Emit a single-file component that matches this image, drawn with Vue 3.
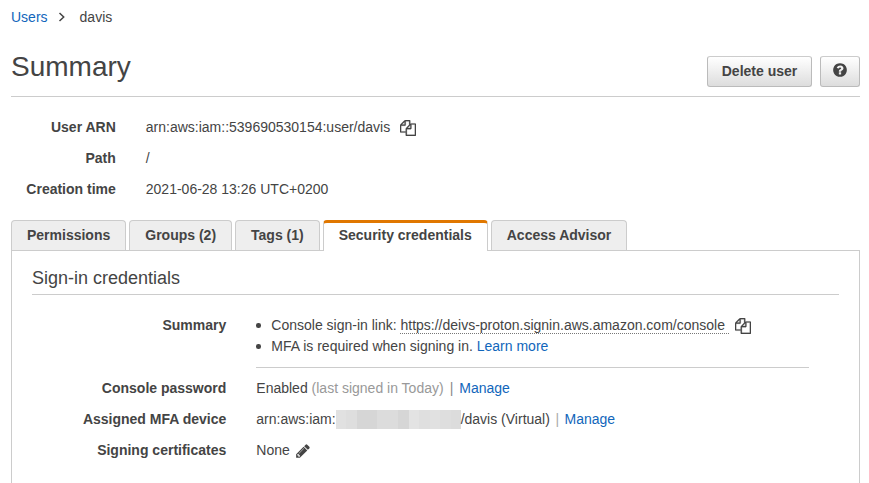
<script setup>
import { h } from 'vue'

const paths = {
  copy: 'M1696 384q40 0 68 28t28 68v1216q0 40-28 68t-68 28h-960q-40 0-68-28t-28-68v-288h-544q-40 0-68-28t-28-68v-672q0-40 20-88t48-76l408-408q28-28 76-48t88-20h416q40 0 68 28t28 68v328q68-40 128-40h416zm-544 213l-299 299h299v-299zm-640-384l-299 299h299v-299zm196 647l316-316v-416h-384v416q0 40-28 68t-68 28h-416v640h512v-256q0-40 20-88t48-76zm956 804v-1152h-384v416q0 40-28 68t-68 28h-416v640h896z',
  help: 'M1024 1376v-192q0-14-9-23t-23-9h-192q-14 0-23 9t-9 23v192q0 14 9 23t23 9h192q14 0 23-9t9-23zm256-672q0-88-55.5-163t-138.5-116-170-41q-243 0-371 213-15 24 8 42l132 100q7 6 19 6 16 0 25-12 53-68 86-92 34-24 86-24 48 0 85.5 26t37.5 59q0 38-20 61t-68 45q-63 28-115.5 86.5t-52.5 125.5v36q0 14 9 23t23 9h192q14 0 23-9t9-23q0-19 21.5-49.5t54.5-49.5q32-18 49-28.5t46-35 44.5-48 28-60.5 12.5-81zm384 192q0 209-103 385.5t-279.5 279.5-385.5 103-385.5-103-279.5-279.5-103-385.5 103-385.5 279.5-279.5 385.5-103 385.5 103 279.5 279.5 103 385.5z',
  pencil: 'M491 1536l91-91-235-235-91 91v107h128v128h107zm523-928q0-22-22-22-10 0-17 7l-542 542q-7 7-7 17 0 22 22 22 10 0 17-7l542-542q7-7 7-17zm-54-192l416 416-832 832h-416v-416zm683 96q0 53-37 90l-166 166-416-416 166-165q36-38 90-38 53 0 91 38l235 234q37 39 37 91z',
}
const Icon = (props) =>
  h('svg', { viewBox: '0 0 1792 1792', width: 16, height: 16, fill: 'currentColor' }, [
    h('path', { d: paths[props.name] }),
  ])
Icon.props = ['name']

const tabs = [
  { label: 'Permissions' },
  { label: 'Groups (2)' },
  { label: 'Tags (1)' },
  { label: 'Security credentials', active: true },
  { label: 'Access Advisor' },
]

const mask = [
  [10, '#e1e1e1'], [11, '#dedede'], [20, '#d6d6d6'], [21, '#dcdcdc'], [11, '#d6d6d6'],
  [10, '#e3e3e3'], [11, '#dfdfdf'], [10, '#e1e1e1'], [11, '#dedede'], [10, '#dcdcdc'],
]
</script>

<template>
  <div class="page">
    <nav class="crumbs">
      <a class="link">Users</a>
      <svg class="chevron" width="8" height="10" viewBox="0 0 8 10">
        <path d="M1.5 1 L5.7 5 L1.5 9" fill="none" stroke="currentColor" stroke-width="1.5" />
      </svg>
      <span>davis</span>
    </nav>

    <header class="header">
      <h1>Summary</h1>
      <div class="actions">
        <button class="btn delete">Delete user</button>
        <button class="btn help"><Icon name="help" /></button>
      </div>
    </header>

    <dl class="details">
      <dt>User ARN</dt>
      <dd>arn:aws:iam::539690530154:user/davis<Icon name="copy" class="copy copy-arn" /></dd>
      <dt>Path</dt>
      <dd>/</dd>
      <dt>Creation time</dt>
      <dd>2021-06-28 13:26 UTC+0200</dd>
    </dl>

    <div class="tabs">
      <div v-for="t in tabs" :key="t.label" class="tab" :class="{ active: t.active }">{{ t.label }}</div>
    </div>

    <section class="panel">
      <h2>Sign-in credentials</h2>
      <dl class="creds">
        <dt>Summary</dt>
        <dd class="summary">
          <ul>
            <li>
              <span>Console sign-in link:&nbsp;</span>
              <span class="url">https://deivs-proton.signin.aws.amazon.com/console</span>
              <Icon name="copy" class="copy copy-url" />
            </li>
            <li><span>MFA is required when signing in.&nbsp;</span><a class="link">Learn more</a></li>
          </ul>
        </dd>
        <dt>Console password</dt>
        <dd>
          <span>Enabled&nbsp;</span><span class="muted">(last signed in Today)</span>
          <span class="sep">|</span><a class="link">Manage</a>
        </dd>
        <dt>Assigned MFA device</dt>
        <dd>
          <span>arn:aws:iam:</span>
          <span class="mask">
            <i v-for="(m, i) in mask" :key="i" :style="{ width: m[0] + 'px', background: m[1] }"></i>
          </span>
          <span>/davis (Virtual)</span>
          <span class="sep light">|</span><a class="link">Manage</a>
        </dd>
        <dt>Signing certificates</dt>
        <dd>None<Icon name="pencil" class="pencil" /></dd>
      </dl>
    </section>
  </div>
</template>

<style>
body {
  margin: 0;
  background: #fff;
  overflow: hidden;
}
</style>

<style scoped>
.page {
  box-sizing: border-box;
  height: 483px;
  padding: 7px 9px 0 11px;
  overflow: hidden;
  display: flex;
  flex-direction: column;
  font: 14px/20px "Liberation Sans", Arial, sans-serif;
  color: #444;
}
.link { color: #1166bb; }
.crumbs {
  display: flex;
  align-items: center;
  height: 20px;
}
.chevron { margin: 0 14px 1px 10px; }
.header {
  display: flex;
  justify-content: space-between;
  box-sizing: border-box;
  height: 70px;
  border-bottom: 1px solid #ccc;
}
h1 {
  margin: 22px 0 0;
  font-size: 28px;
  line-height: 36px;
  font-weight: 400;
}
.actions {
  display: flex;
  gap: 8px;
  padding-top: 29px;
}
.btn {
  box-sizing: border-box;
  height: 31px;
  padding: 0 0 2px;
  display: flex;
  align-items: center;
  justify-content: center;
  border: 1px solid #bbb;
  border-top-color: #ccc;
  border-radius: 3px;
  background: linear-gradient(#fff, #ddd);
  color: #444;
  font: bold 14px/20px "Liberation Sans", Arial, sans-serif;
}
.delete { width: 105px; }
.help { width: 40px; padding-bottom: 3px; }
dl, dd, ul { margin: 0; padding: 0; }
dt {
  font-weight: 700;
  text-align: right;
}
dd {
  display: flex;
  align-items: center;
  white-space: nowrap;
}
.details {
  display: grid;
  grid-template-columns: 104.8px 1fr;
  grid-auto-rows: 20px;
  gap: 11px 30px;
  padding-top: 20px;
}
.copy {
  stroke: currentColor;
  stroke-width: 30;
}
.copy-arn { margin: 2px 0 0 10px; }
.tabs {
  display: flex;
  gap: 3px;
  margin-top: 21px;
}
.tab {
  box-sizing: border-box;
  height: 30px;
  padding: 4px 15px 0;
  border: 1px solid #ccc;
  border-bottom: 0;
  border-radius: 4px 4px 0 0;
  background: #eee;
  font-weight: 700;
  white-space: nowrap;
}
.tab.active {
  height: 31px;
  margin-bottom: -1px;
  padding-top: 2px;
  border-top: 3px solid #e07700;
  background: #fff;
  position: relative;
}
.panel {
  flex: 1;
  border: 1px solid #ccc;
  border-bottom: 0;
  padding: 15px 20px 0;
}
h2 {
  margin: 0;
  padding-bottom: 4px;
  border-bottom: 1px solid #ccc;
  font-size: 18px;
  line-height: 24px;
  font-weight: 400;
}
.creds {
  display: grid;
  grid-template-columns: 194.3px 1fr;
  grid-template-rows: 52px 20px 20px 20px;
  row-gap: 11px;
  column-gap: 30px;
  padding: 20px 30px 0 0;
}
.summary {
  align-items: flex-start;
  margin-bottom: -1px;
  border-bottom: 1px solid #ccc;
}
ul {
  list-style: none;
}
li {
  display: flex;
  align-items: center;
  height: 21px;
}
li:first-child { height: 20px; }
li:last-child { height: 22px; }
li::before {
  content: "";
  width: 4.5px;
  height: 4.5px;
  margin: 1px 10.5px 0 0;
  border-radius: 50%;
  background: #444;
}
.url {
  padding-right: 4px;
  line-height: 16px;
  border-bottom: 1px dotted #777;
}
.copy-url { margin: 2px 0 0 6px; }
.muted { color: #999; }
.sep { margin: 0 6px; color: #888; }
.light { margin: 0 5.5px; color: #aaa; }
.mask {
  display: flex;
  height: 19px;
}
.mask i { height: 19px; }
.pencil { margin: 2px 0 0 5px; }
</style>
